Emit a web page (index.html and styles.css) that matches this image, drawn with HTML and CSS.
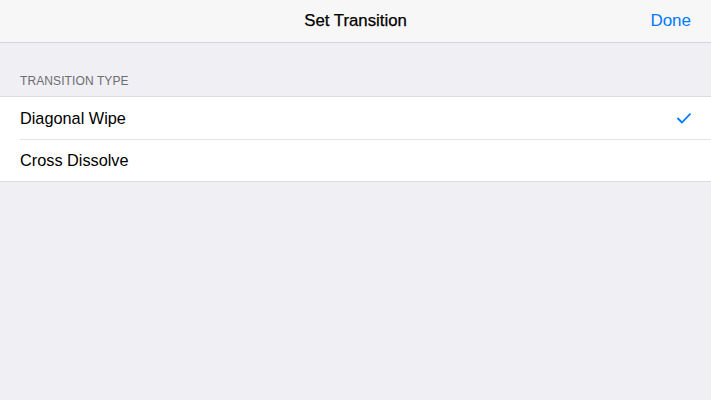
FILE: index.html
```html
<!DOCTYPE html>
<html>
<head>
<meta charset="utf-8">
<link rel="stylesheet" href="styles.css">
</head>
<body>
<header class="nav">
  <div class="nav-side"></div>
  <div class="nav-title">Set Transition</div>
  <div class="nav-side nav-right"><span class="done">Done</span></div>
</header>
<main class="content">
  <div class="section-header">TRANSITION TYPE</div>
  <ul class="list">
    <li class="row">
      <span class="row-label">Diagonal Wipe</span>
      <svg class="check" width="14" height="11" viewBox="0 0 14 11"><path d="M1 5.5 L5 9.5 L13 1.2" fill="none" stroke="#007aff" stroke-width="1.8" stroke-linecap="round" stroke-linejoin="round"/></svg>
    </li>
    <li class="row">
      <span class="row-label">Cross Dissolve</span>
    </li>
  </ul>
</main>
</body>
</html>
```
FILE: styles.css
```css
html, body {
  margin: 0;
  padding: 0;
  height: 100%;
}
body {
  background: #efeff4;
  font-family: "Liberation Sans", Arial, sans-serif;
  color: #000;
  -webkit-font-smoothing: antialiased;
}
.nav {
  height: 42px;
  background: #f7f7f7;
  border-bottom: 1px solid #d6d6da;
  display: flex;
  align-items: center;
  padding: 0 20px;
}
.nav-side {
  flex: 1;
}
.nav-right {
  display: flex;
  justify-content: flex-end;
}
.nav-title {
  font-size: 16.8px;
  font-weight: 400;
  color: #000;
  -webkit-text-stroke: 0.25px #000;
}
.done {
  font-size: 17px;
  color: #007aff;
}
.content {
  padding-top: 31px;
}
.section-header {
  font-size: 12px;
  color: #6d6d72;
  padding: 0 20px 7px;
  letter-spacing: 0.1px;
  line-height: 15px;
}
.list {
  list-style: none;
  margin: 0;
  padding: 0 0 0 20px;
  background: #fff;
  border-top: 1px solid #dcdce0;
  border-bottom: 1px solid #dcdce0;
}
.row {
  height: 42px;
  display: flex;
  align-items: center;
  justify-content: space-between;
  padding-right: 20px;
  font-size: 16.3px;
}
.row + .row {
  border-top: 1px solid #e3e3e6;
  height: 41px;
}
.check {
  display: block;
}
```
